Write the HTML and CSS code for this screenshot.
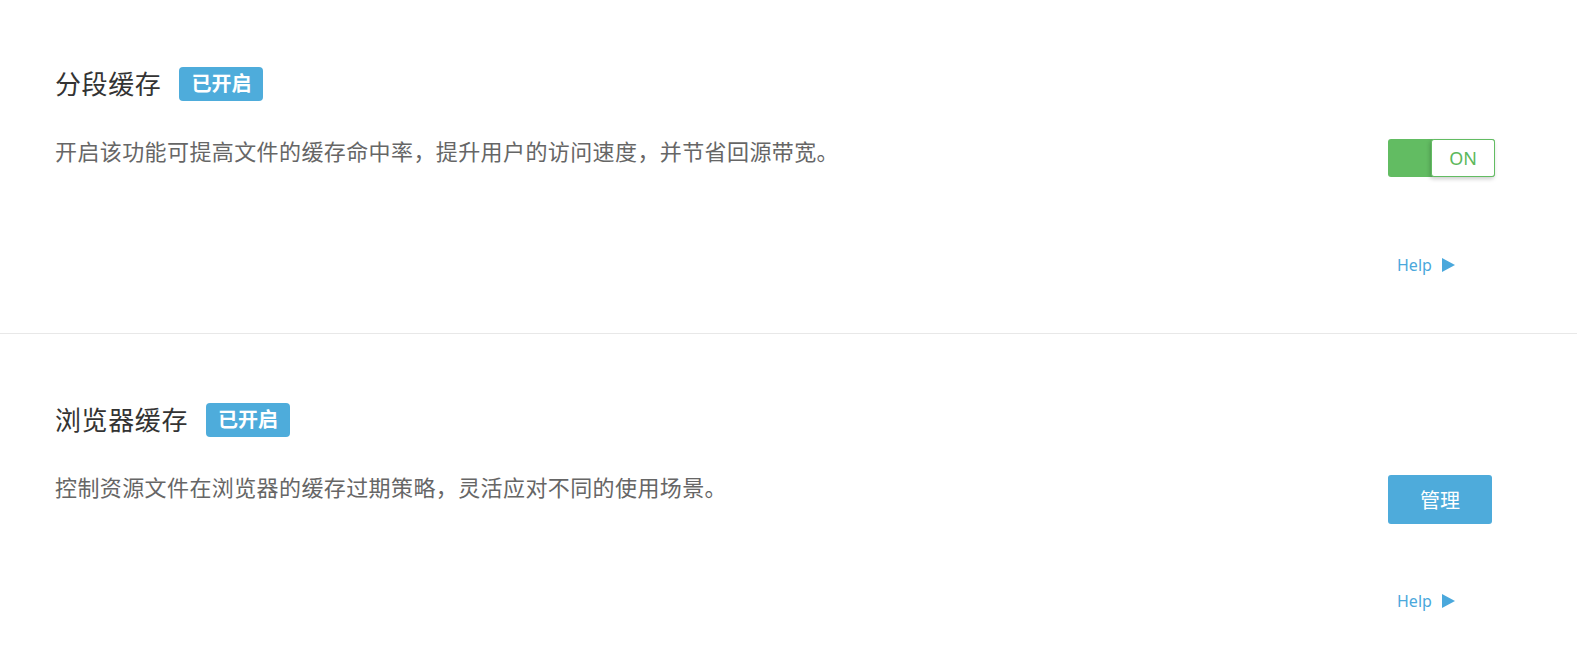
FILE: index.html
```html
<!DOCTYPE html>
<html lang="zh-CN">
<head>
  <meta charset="UTF-8" />
  <title>缓存设置</title>
  <link rel="stylesheet" href="styles.css">
</head>
<body>

  <!-- 分段缓存 -->
  <section class="setting">
    <div class="setting-main">
      <div class="setting-title">
        <h2>分段缓存</h2>
        <span class="badge">已开启</span>
      </div>
      <p class="setting-desc">开启该功能可提高文件的缓存命中率，提升用户的访问速度，并节省回源带宽。</p>
    </div>
    <div class="setting-side">
      <div class="control">
        <div class="switch">
          <span class="switch-knob">ON</span>
        </div>
      </div>
      <a class="help" href="#">Help
        <svg width="13" height="14" viewBox="0 0 13 14"><path d="M0 0 L13 7 L0 14 Z" fill="#4aa8dc"/></svg>
      </a>
    </div>
  </section>

  <!-- 浏览器缓存 -->
  <section class="setting">
    <div class="setting-main">
      <div class="setting-title">
        <h2>浏览器缓存</h2>
        <span class="badge">已开启</span>
      </div>
      <p class="setting-desc">控制资源文件在浏览器的缓存过期策略，灵活应对不同的使用场景。</p>
    </div>
    <div class="setting-side">
      <div class="control">
        <button class="btn">管理</button>
      </div>
      <a class="help" href="#">Help
        <svg width="13" height="14" viewBox="0 0 13 14"><path d="M0 0 L13 7 L0 14 Z" fill="#4aa8dc"/></svg>
      </a>
    </div>
  </section>

</body>
</html>
```

FILE: styles.css
```css
body {
  margin: 0;
  padding: 0;
  background: #fff;
  font-family: "Noto Sans", "Noto Sans CJK SC", sans-serif;
  color: #333;
}

.setting {
  display: flex;
  height: 333px;
  padding-left: 55px;
  border-bottom: 1px solid #e8e8e8;
}

.setting-main {
  flex: 1;
  padding-top: 67px;
}

.setting + .setting .setting-main {
  padding-top: 69px;
}

.setting-title {
  display: flex;
  align-items: center;
  height: 34px;
}

.setting-title h2 {
  margin: 0;
  font-size: 26px;
  font-weight: normal;
  letter-spacing: 0.6px;
  line-height: 34px;
  color: #333;
}

.badge {
  margin-left: 18px;
  height: 34px;
  padding: 0 12px;
  line-height: 34px;
  background: #4eacdb;
  color: #fff;
  font-size: 20px;
  font-weight: bold;
  border-radius: 4px;
}

.setting-desc {
  margin: 35px 0 0;
  font-size: 22px;
  line-height: 30px;
  letter-spacing: 0.4px;
  color: #666;
}

.setting-side {
  width: 107px;
  margin-right: 82px;
  padding-top: 139px;
  display: flex;
  flex-direction: column;
}

.setting + .setting .setting-side {
  padding-top: 141px;
}

.control {
  height: 116px;
}

.switch {
  display: flex;
  justify-content: flex-end;
  width: 107px;
  height: 38px;
  background: #62bc62;
  border-radius: 3px;
  box-sizing: border-box;
}

.switch-knob {
  width: 64px;
  height: 38px;
  box-sizing: border-box;
  border: 1px solid #62bc62;
  border-radius: 3px;
  background: #fff;
  color: #5cb85c;
  font-size: 18px;
  line-height: 36px;
  text-align: center;
  box-shadow: -1px 2px 4px rgba(0, 0, 0, 0.2);
}

.btn {
  width: 104px;
  height: 49px;
  border: none;
  border-radius: 3px;
  background: #4eabdb;
  color: #fff;
  font-family: "Noto Sans CJK SC", sans-serif;
  font-size: 20px;
  cursor: pointer;
}

.help {
  display: flex;
  align-items: center;
  gap: 10px;
  margin-left: 9px;
  height: 20px;
  font-size: 16px;
  color: #4aa8dc;
  text-decoration: none;
}
```
